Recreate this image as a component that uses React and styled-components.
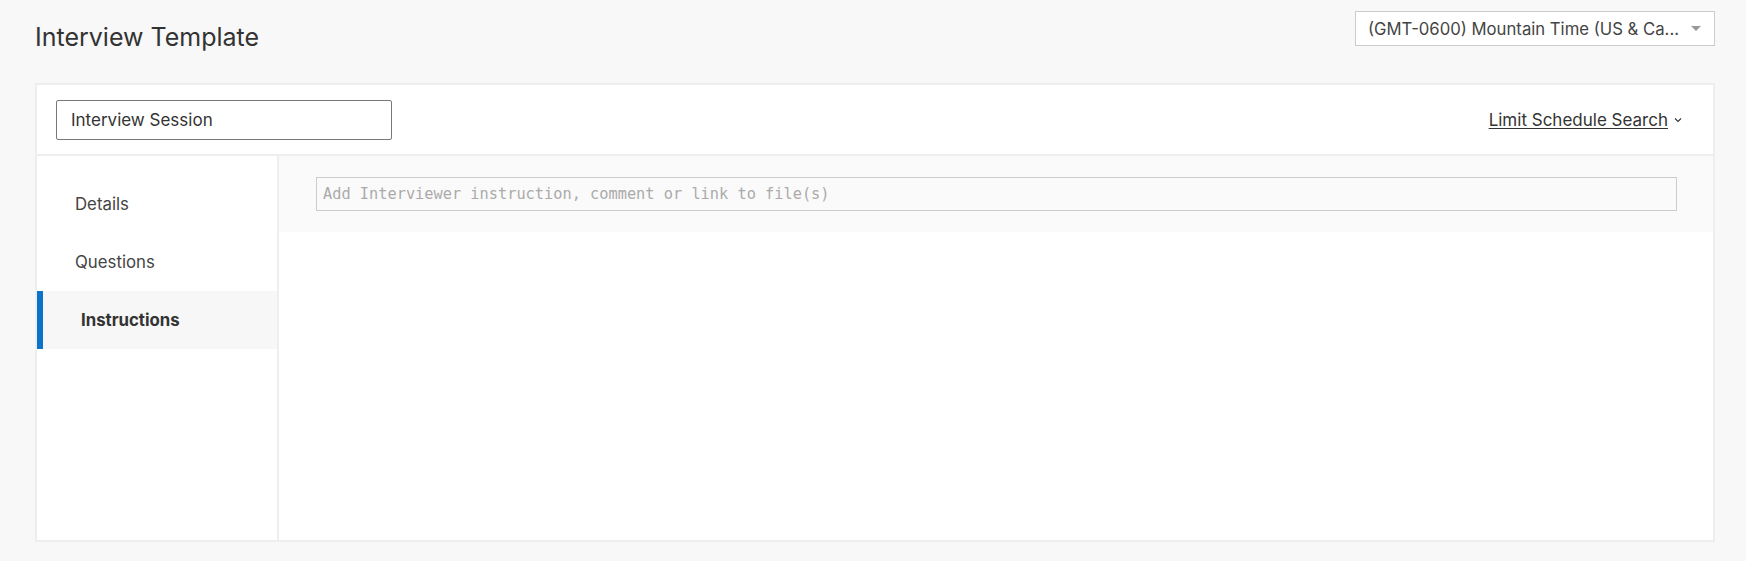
import styled, { createGlobalStyle } from "styled-components";

const GlobalStyle = createGlobalStyle`
  html, body {
    margin: 0;
    padding: 0;
    background: #f8f8f8;
    font-family: Inter, "Noto Sans", sans-serif;
    color: #333;
  }
`;

const App = () => {
  return (
    <>
      <GlobalStyle />
      <Page>
        <TopBar>
          <Title>Interview Template</Title>
          <TimezoneSelect>
            <span>(GMT-0600) Mountain Time (US &amp; Ca...</span>
            <Caret />
          </TimezoneSelect>
        </TopBar>

        <Card>
          <CardHeader>
            <NameInput defaultValue="Interview Session" />
            <LimitLink>
              <u>Limit Schedule Search</u>
              <svg width="8" height="6" viewBox="0 0 8 6">
                <path d="M1 1.5 L4 4.5 L7 1.5" fill="none" stroke="#333" strokeWidth="1.1" />
              </svg>
            </LimitLink>
          </CardHeader>

          <CardBody>
            <Sidebar>
              <NavItem>Details</NavItem>
              <NavItem>Questions</NavItem>
              <NavItem active>Instructions</NavItem>
            </Sidebar>
            <Main>
              <InstructionPanel>
                <InstructionInput placeholder="Add Interviewer instruction, comment or link to file(s)" />
              </InstructionPanel>
            </Main>
          </CardBody>
        </Card>
      </Page>
    </>
  );
};

const Page = styled.div`
  padding: 11px 31px 19px 35px;
`;

const TopBar = styled.div`
  display: flex;
  justify-content: space-between;
  align-items: flex-start;
  height: 72px;
`;

const Title = styled.h1`
  margin: 11px 0 0;
  font-size: 25px;
  font-weight: 400;
  color: #333;
  line-height: 30px;
`;

const TimezoneSelect = styled.div`
  box-sizing: border-box;
  width: 360px;
  height: 35px;
  border: 1px solid #ccc;
  background: #fff;
  display: flex;
  align-items: center;
  justify-content: space-between;
  padding: 0 13px 0 12px;
  font-size: 16.7px;
  color: #444;
`;

const Caret = styled.span`
  width: 0;
  height: 0;
  border-left: 5px solid transparent;
  border-right: 5px solid transparent;
  border-top: 5px solid #999;
`;

const Card = styled.div`
  border: 2px solid #eee;
  background: #fff;
  height: 455px;
  display: flex;
  flex-direction: column;
`;

const CardHeader = styled.div`
  height: 69px;
  border-bottom: 2px solid #eee;
  display: flex;
  align-items: center;
  justify-content: space-between;
  padding: 0 31px 0 19px;
  flex-shrink: 0;
`;

const NameInput = styled.input`
  box-sizing: border-box;
  width: 336px;
  height: 40px;
  border: 1px solid #777;
  border-radius: 2px;
  padding: 0 14px;
  font-family: Inter, "Noto Sans", sans-serif;
  font-size: 17px;
  color: #333;
  outline: none;
`;

const LimitLink = styled.a`
  display: flex;
  align-items: center;
  gap: 6px;
  font-size: 17px;
  color: #333;
  cursor: pointer;

  u {
    text-underline-offset: 2px;
  }
`;

const CardBody = styled.div`
  flex: 1;
  display: flex;
`;

const Sidebar = styled.nav`
  width: 240px;
  border-right: 2px solid #eee;
  padding-top: 19px;
  flex-shrink: 0;
`;

const NavItem = styled.div`
  box-sizing: border-box;
  height: 58px;
  display: flex;
  align-items: center;
  padding-left: ${(p) => (p.active ? "38px" : "32px")};
  font-size: 16.8px;
  font-weight: ${(p) => (p.active ? 700 : 400)};
  color: ${(p) => (p.active ? "#333" : "#444")};
  background: ${(p) => (p.active ? "#f7f7f7" : "transparent")};
  border-left: 6px solid ${(p) => (p.active ? "#0b72c9" : "transparent")};
`;

const Main = styled.div`
  flex: 1;
`;

const InstructionPanel = styled.div`
  background: #fafafa;
  padding: 21px 36px 21px 37px;
`;

const InstructionInput = styled.input`
  box-sizing: border-box;
  width: 100%;
  height: 34px;
  border: 1px solid #ccc;
  background: #fafafa;
  padding: 0 6px;
  font-family: "DejaVu Sans Mono", monospace;
  font-size: 15.3px;
  color: #333;
  outline: none;

  &::placeholder {
    color: #aaa;
  }
`;

export default App;
